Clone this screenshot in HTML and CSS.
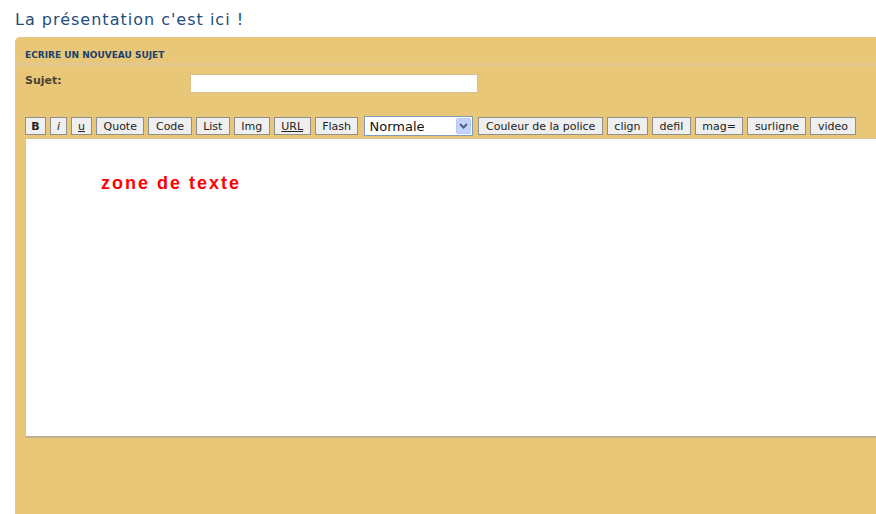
FILE: index.html
```html
<!DOCTYPE html>
<html>
<head>
  <link rel="stylesheet" href="styles.css">
</head>
<body>
  <h1 class="page-title">La présentation c'est ici !</h1>

  <div class="panel">
    <div class="panel-header">ECRIRE UN NOUVEAU SUJET</div>

    <div class="subject-row">
      <label class="subject-label" for="sujet">Sujet:</label>
      <input type="text" id="sujet" class="subject-input">
    </div>

    <div class="toolbar">
      <button class="tool-btn bold">B</button>
      <button class="tool-btn italic">i</button>
      <button class="tool-btn small under">u</button>
      <button class="tool-btn">Quote</button>
      <button class="tool-btn">Code</button>
      <button class="tool-btn">List</button>
      <button class="tool-btn">Img</button>
      <button class="tool-btn under">URL</button>
      <button class="tool-btn">Flash</button>
      <div class="size-select">
        <span>Normale</span>
        <span class="select-arrow">
          <svg width="9" height="6" viewBox="0 0 9 6"><path d="M1 1 L4.5 4.5 L8 1" fill="none" stroke="#4d6185" stroke-width="2"/></svg>
        </span>
      </div>
      <button class="tool-btn">Couleur de la police</button>
      <button class="tool-btn">clign</button>
      <button class="tool-btn">defil</button>
      <button class="tool-btn">mag=</button>
      <button class="tool-btn">surligne</button>
      <button class="tool-btn">video</button>
    </div>

    <div class="editor">
      <p class="editor-text">zone de texte</p>
    </div>
  </div>
</body>
</html>
```

FILE: styles.css
```css
:root {
  --panel-bg: #e8c878;
  --panel-line: #e2c895;
  --title-blue: #1f4d7c;
  --header-blue: #1b3f6e;
  --btn-bg: #efefef;
  --btn-border: #8f8f8f;
}

body {
  margin: 0;
  padding: 0 0 0 15px;
  font-family: "DejaVu Sans", Verdana, sans-serif;
  background: white;
  overflow: hidden;
  height: 514px;
}

.page-title {
  margin: 0;
  padding-top: 10px;
  height: 28px;
  box-sizing: border-box;
  font-size: 16px;
  font-weight: normal;
  color: var(--title-blue);
  letter-spacing: 1px;
}

.panel {
  margin-top: 9px;
  width: 880px;
  height: 477px;
  background: var(--panel-bg);
  border-top-left-radius: 5px;
}

.panel-header {
  height: 29px;
  padding: 13px 0 0 10px;
  box-sizing: border-box;
  font-size: 9px;
  font-weight: bold;
  color: var(--header-blue);
  border-bottom: 3px solid var(--panel-line);
}

.subject-row {
  display: flex;
  align-items: flex-start;
  padding: 8px 0 0 10px;
  height: 44px;
  box-sizing: border-box;
}

.subject-label {
  width: 165px;
  font-size: 11px;
  font-weight: bold;
  color: #4a4230;
}

.subject-input {
  width: 288px;
  height: 19px;
  box-sizing: border-box;
  border: 1px solid #d9c08a;
  background: white;
  margin: 0;
}

.toolbar {
  display: flex;
  align-items: center;
  gap: 4px;
  padding: 6px 0 0 10px;
  height: 26px;
  box-sizing: border-box;
}

.tool-btn {
  height: 18px;
  margin: 0;
  padding: 0 6.5px;
  font-family: "DejaVu Sans", Verdana, sans-serif;
  font-size: 11px;
  color: #222;
  background: var(--btn-bg);
  border: 1px solid var(--btn-border);
  border-radius: 0;
  white-space: nowrap;
}

.tool-btn.bold {
  font-weight: bold;
  width: 21px;
  padding: 0;
}

.tool-btn.italic {
  font-style: italic;
  width: 17px;
  padding: 0;
}

.tool-btn.small {
  width: 21px;
  padding: 0;
}

.tool-btn.under {
  text-decoration: underline;
}

.size-select {
  display: flex;
  align-items: center;
  justify-content: space-between;
  width: 109px;
  height: 20px;
  box-sizing: border-box;
  margin: 0 1px 0 2px;
  padding: 0 1px 0 4px;
  background: white;
  border: 1px solid #7f9db9;
  font-size: 13px;
  color: #111;
}

.select-arrow {
  display: flex;
  align-items: center;
  justify-content: center;
  width: 15px;
  height: 16px;
  background: #c3d3fd;
  border: 1px solid #b7c9f3;
  border-radius: 2px;
  box-sizing: border-box;
}

.editor {
  margin: 2px 0 0 10px;
  height: 300px;
  box-sizing: border-box;
  background: white;
  border-top: 1px solid #d4c49a;
  border-left: 1px solid #d4c49a;
  border-bottom: 2px solid #c0b08a;
}

.editor-text {
  margin: 0;
  padding: 34px 0 0 75px;
  font-family: "Liberation Sans", Arial, sans-serif;
  font-size: 18px;
  font-weight: bold;
  color: #ff0000;
  letter-spacing: 2px;
}
```
